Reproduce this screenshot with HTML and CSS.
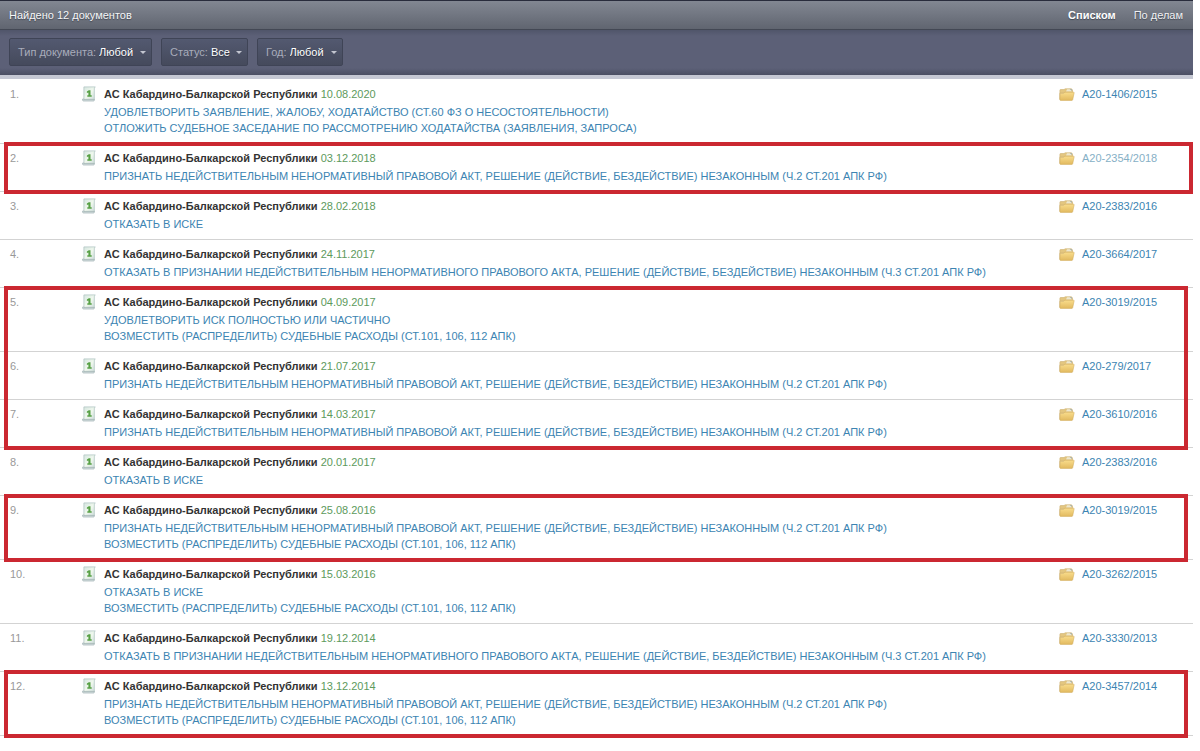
FILE: index.html
```html
<!DOCTYPE html>
<html lang="ru">
<head>
<meta charset="utf-8">
<title>Найдено 12 документов</title>
<link rel="stylesheet" href="styles.css">
</head>
<body>
<svg class="sprite" aria-hidden="true">
  <defs>
    <linearGradient id="paper" x1="0" y1="0" x2="1" y2="1">
      <stop offset="0" stop-color="#d5e6e0"/><stop offset="0.5" stop-color="#f0f8ee"/><stop offset="1" stop-color="#c9d9d8"/>
    </linearGradient>
    <linearGradient id="flap" x1="0" y1="0" x2="0" y2="1">
      <stop offset="0" stop-color="#f9dd8c"/><stop offset="1" stop-color="#e2b95f"/>
    </linearGradient>
    <symbol id="doc" viewBox="0 0 14 16">
      <path d="M1.900 .9H13.300L12.300 2V14H1.900z" fill="url(#paper)" stroke="#b3c6c4" stroke-width=".8"/>
      <path d="M1.900 13H.6V14.300Q.8 15 1.600 15H11.500Q12.300 15 12.300 14V13.400H1.900z" fill="#d5dfdf" stroke="#9fb0b2" stroke-width=".7"/>
      <path d="M4.900 5.400 6.800 4.200H8.500V9.200H9.700V10.700H5.300V9.200H6.400V6.400L4.900 6.900z" fill="#57a045"/>
    </symbol>
    <symbol id="folder" viewBox="0 0 16 13">
      <path d="M.9 11.500V2.200Q.9 1.500 1.600 1.500H5L6.200 .8H12.500L13.500 2V5H.9z" fill="#e3c680" stroke="#cdb071" stroke-width=".6"/>
      <path d="M8 1.200H11L12.600 2.400V3.600H7z" fill="#eee8d0"/>
      <path d="M10.500 .7 13 1.300V3z" fill="#a4b1b2"/>
      <path d="M1.200 5.500H4.500L5.700 4.200H14.700Q15.300 4.200 15.100 5L13.700 11.700Q13.500 12.400 12.800 12.400H1.600Q.9 12.400 .9 11.700z" fill="url(#flap)" stroke="#d3b062" stroke-width=".6"/>
    </symbol>
  </defs>
</svg>
<div class="page">
  <header>
    <div class="summary">
      <h1>Найдено 12 документов</h1>
      <nav class="views"><a class="current" href="#list">Списком</a><a href="#cases">По делам</a></nav>
    </div>
    <form class="filters">
      <label class="filter">Тип документа: <select><option>Любой</option></select></label>
      <label class="filter">Статус: <select><option>Все</option></select></label>
      <label class="filter">Год: <select><option>Любой</option></select></label>
    </form>
  </header>
  <main id="list">
    <div class="group">
      <article class="row">
        <span class="num">1.</span><svg class="doc"><use href="#doc"/></svg>
        <div class="info"><p class="court"><b>АС Кабардино-Балкарской Республики</b> <time>10.08.2020</time></p>
          <a href="#d1">УДОВЛЕТВОРИТЬ ЗАЯВЛЕНИЕ, ЖАЛОБУ, ХОДАТАЙСТВО (СТ.60 ФЗ О НЕСОСТОЯТЕЛЬНОСТИ)<br>ОТЛОЖИТЬ СУДЕБНОЕ ЗАСЕДАНИЕ ПО РАССМОТРЕНИЮ ХОДАТАЙСТВА (ЗАЯВЛЕНИЯ, ЗАПРОСА)</a></div>
        <a class="case" href="#c1"><svg class="folder"><use href="#folder"/></svg>А20-1406/2015</a>
      </article>
    </div>
    <div class="group marked wide">
      <article class="row">
        <span class="num">2.</span><svg class="doc"><use href="#doc"/></svg>
        <div class="info"><p class="court"><b>АС Кабардино-Балкарской Республики</b> <time>03.12.2018</time></p>
          <a href="#d2">ПРИЗНАТЬ НЕДЕЙСТВИТЕЛЬНЫМ НЕНОРМАТИВНЫЙ ПРАВОВОЙ АКТ, РЕШЕНИЕ (ДЕЙСТВИЕ, БЕЗДЕЙСТВИЕ) НЕЗАКОННЫМ (Ч.2 СТ.201 АПК РФ)</a></div>
        <a class="case seen" href="#c2"><svg class="folder"><use href="#folder"/></svg>А20-2354/2018</a>
      </article>
    </div>
    <div class="group">
      <article class="row">
        <span class="num">3.</span><svg class="doc"><use href="#doc"/></svg>
        <div class="info"><p class="court"><b>АС Кабардино-Балкарской Республики</b> <time>28.02.2018</time></p>
          <a href="#d3">ОТКАЗАТЬ В ИСКЕ</a></div>
        <a class="case" href="#c3"><svg class="folder"><use href="#folder"/></svg>А20-2383/2016</a>
      </article>
      <article class="row">
        <span class="num">4.</span><svg class="doc"><use href="#doc"/></svg>
        <div class="info"><p class="court"><b>АС Кабардино-Балкарской Республики</b> <time>24.11.2017</time></p>
          <a href="#d4">ОТКАЗАТЬ В ПРИЗНАНИИ НЕДЕЙСТВИТЕЛЬНЫМ НЕНОРМАТИВНОГО ПРАВОВОГО АКТА, РЕШЕНИЕ (ДЕЙСТВИЕ, БЕЗДЕЙСТВИЕ) НЕЗАКОННЫМ (Ч.3 СТ.201 АПК РФ)</a></div>
        <a class="case" href="#c4"><svg class="folder"><use href="#folder"/></svg>А20-3664/2017</a>
      </article>
    </div>
    <div class="group marked">
      <article class="row">
        <span class="num">5.</span><svg class="doc"><use href="#doc"/></svg>
        <div class="info"><p class="court"><b>АС Кабардино-Балкарской Республики</b> <time>04.09.2017</time></p>
          <a href="#d5">УДОВЛЕТВОРИТЬ ИСК ПОЛНОСТЬЮ ИЛИ ЧАСТИЧНО<br>ВОЗМЕСТИТЬ (РАСПРЕДЕЛИТЬ) СУДЕБНЫЕ РАСХОДЫ (СТ.101, 106, 112 АПК)</a></div>
        <a class="case" href="#c5"><svg class="folder"><use href="#folder"/></svg>А20-3019/2015</a>
      </article>
      <article class="row">
        <span class="num">6.</span><svg class="doc"><use href="#doc"/></svg>
        <div class="info"><p class="court"><b>АС Кабардино-Балкарской Республики</b> <time>21.07.2017</time></p>
          <a href="#d6">ПРИЗНАТЬ НЕДЕЙСТВИТЕЛЬНЫМ НЕНОРМАТИВНЫЙ ПРАВОВОЙ АКТ, РЕШЕНИЕ (ДЕЙСТВИЕ, БЕЗДЕЙСТВИЕ) НЕЗАКОННЫМ (Ч.2 СТ.201 АПК РФ)</a></div>
        <a class="case" href="#c6"><svg class="folder"><use href="#folder"/></svg>А20-279/2017</a>
      </article>
      <article class="row">
        <span class="num">7.</span><svg class="doc"><use href="#doc"/></svg>
        <div class="info"><p class="court"><b>АС Кабардино-Балкарской Республики</b> <time>14.03.2017</time></p>
          <a href="#d7">ПРИЗНАТЬ НЕДЕЙСТВИТЕЛЬНЫМ НЕНОРМАТИВНЫЙ ПРАВОВОЙ АКТ, РЕШЕНИЕ (ДЕЙСТВИЕ, БЕЗДЕЙСТВИЕ) НЕЗАКОННЫМ (Ч.2 СТ.201 АПК РФ)</a></div>
        <a class="case" href="#c7"><svg class="folder"><use href="#folder"/></svg>А20-3610/2016</a>
      </article>
    </div>
    <div class="group">
      <article class="row">
        <span class="num">8.</span><svg class="doc"><use href="#doc"/></svg>
        <div class="info"><p class="court"><b>АС Кабардино-Балкарской Республики</b> <time>20.01.2017</time></p>
          <a href="#d8">ОТКАЗАТЬ В ИСКЕ</a></div>
        <a class="case" href="#c8"><svg class="folder"><use href="#folder"/></svg>А20-2383/2016</a>
      </article>
    </div>
    <div class="group marked">
      <article class="row">
        <span class="num">9.</span><svg class="doc"><use href="#doc"/></svg>
        <div class="info"><p class="court"><b>АС Кабардино-Балкарской Республики</b> <time>25.08.2016</time></p>
          <a href="#d9">ПРИЗНАТЬ НЕДЕЙСТВИТЕЛЬНЫМ НЕНОРМАТИВНЫЙ ПРАВОВОЙ АКТ, РЕШЕНИЕ (ДЕЙСТВИЕ, БЕЗДЕЙСТВИЕ) НЕЗАКОННЫМ (Ч.2 СТ.201 АПК РФ)<br>ВОЗМЕСТИТЬ (РАСПРЕДЕЛИТЬ) СУДЕБНЫЕ РАСХОДЫ (СТ.101, 106, 112 АПК)</a></div>
        <a class="case" href="#c9"><svg class="folder"><use href="#folder"/></svg>А20-3019/2015</a>
      </article>
    </div>
    <div class="group">
      <article class="row">
        <span class="num">10.</span><svg class="doc"><use href="#doc"/></svg>
        <div class="info"><p class="court"><b>АС Кабардино-Балкарской Республики</b> <time>15.03.2016</time></p>
          <a href="#d10">ОТКАЗАТЬ В ИСКЕ<br>ВОЗМЕСТИТЬ (РАСПРЕДЕЛИТЬ) СУДЕБНЫЕ РАСХОДЫ (СТ.101, 106, 112 АПК)</a></div>
        <a class="case" href="#c10"><svg class="folder"><use href="#folder"/></svg>А20-3262/2015</a>
      </article>
      <article class="row">
        <span class="num">11.</span><svg class="doc"><use href="#doc"/></svg>
        <div class="info"><p class="court"><b>АС Кабардино-Балкарской Республики</b> <time>19.12.2014</time></p>
          <a href="#d11">ОТКАЗАТЬ В ПРИЗНАНИИ НЕДЕЙСТВИТЕЛЬНЫМ НЕНОРМАТИВНОГО ПРАВОВОГО АКТА, РЕШЕНИЕ (ДЕЙСТВИЕ, БЕЗДЕЙСТВИЕ) НЕЗАКОННЫМ (Ч.3 СТ.201 АПК РФ)</a></div>
        <a class="case" href="#c11"><svg class="folder"><use href="#folder"/></svg>А20-3330/2013</a>
      </article>
    </div>
    <div class="group marked">
      <article class="row">
        <span class="num">12.</span><svg class="doc"><use href="#doc"/></svg>
        <div class="info"><p class="court"><b>АС Кабардино-Балкарской Республики</b> <time>13.12.2014</time></p>
          <a href="#d12">ПРИЗНАТЬ НЕДЕЙСТВИТЕЛЬНЫМ НЕНОРМАТИВНЫЙ ПРАВОВОЙ АКТ, РЕШЕНИЕ (ДЕЙСТВИЕ, БЕЗДЕЙСТВИЕ) НЕЗАКОННЫМ (Ч.2 СТ.201 АПК РФ)<br>ВОЗМЕСТИТЬ (РАСПРЕДЕЛИТЬ) СУДЕБНЫЕ РАСХОДЫ (СТ.101, 106, 112 АПК)</a></div>
        <a class="case" href="#c12"><svg class="folder"><use href="#folder"/></svg>А20-3457/2014</a>
      </article>
    </div>
  </main>
</div>
</body>
</html>
```
FILE: styles.css
```css
* { box-sizing: border-box; }
body {
  margin: 0;
  background: #fff;
  color: #333;
  font: 11px/16px "Liberation Sans", Arial, sans-serif;
}
a { color: #3c84b2; text-decoration: none; }
.sprite { position: absolute; width: 0; height: 0; }
.page { min-height: 100vh; margin-right: 7px; }

header { border-bottom: 4px solid #c5c8d3; margin-bottom: 1px; }
.summary {
  display: flex;
  justify-content: space-between;
  align-items: center;
  height: 30px;
  padding: 0 10px 0 9px;
  border-top: 1px solid #292c3c;
  border-bottom: 1px solid #434854;
  background: linear-gradient(#828792, #606570);
}
h1 { margin: 0; font-size: 11px; font-weight: 400; color: #f4f5f7; text-shadow: 0 1px 1px #444955; }
.views { display: flex; gap: 18px; }
.views a { color: #f0f1f3; text-shadow: 0 1px 1px #444955; }
.views .current { font-weight: 700; color: #fff; }
.filters {
  display: flex;
  gap: 9px;
  padding: 8px 9px;
  background: linear-gradient(#50556a, #5c6077 6px, #5c6077 38px, #4b4f63);
}
.filter {
  display: flex;
  align-items: center;
  gap: 3px;
  height: 28px;
  margin-bottom: 1px;
  padding: 0 5px 0 8px;
  border: 1px solid #3f4456;
  border-radius: 2px;
  background: linear-gradient(#535970, #454a5c);
  color: #a9adbb;
}
.filter::after {
  content: "";
  margin-left: 3px;
  border: 3px solid transparent;
  border-top-color: #c3c6d0;
  border-bottom: 0;
}
.filter select {
  appearance: none;
  margin: 0;
  padding: 0;
  border: 0;
  background: none;
  color: #fff;
  font: inherit;
  text-shadow: 0 1px 1px #2c3040;
}

.group { position: relative; }
.marked::after {
  content: "";
  position: absolute;
  inset: -2px 5px -2px 4px;
  border: 4px solid #cb2831;
  pointer-events: none;
}
.wide::after { right: 0; }
.row {
  display: grid;
  grid-template-columns: 72px 22px 1fr 134px;
  padding: 6px 0 7px 10px;
  border-bottom: 1px solid #d3d3d3;
}
.num { color: #999; }
.doc { width: 14px; height: 16px; }
.court { margin: 0 0 2px; }
.court time { color: #5d9a5c; }
.info a { display: block; }
.case { display: flex; gap: 7px; height: 16px; align-items: center; }
.case.seen { color: #86b0c6; }
.folder { width: 16px; height: 13px; }
```
